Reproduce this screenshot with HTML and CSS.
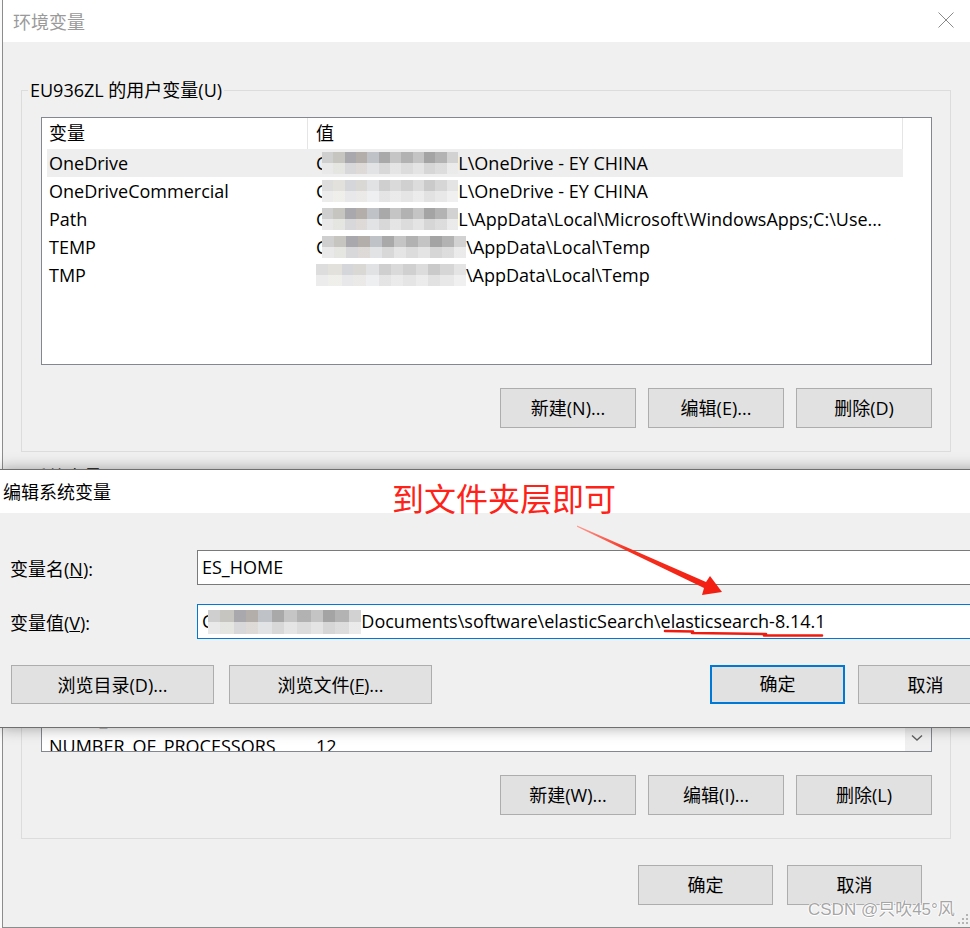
FILE: index.html
```html
<!DOCTYPE html>
<html lang="zh-CN">
<head>
<meta charset="utf-8">
<title>环境变量</title>
<link rel="stylesheet" href="styles.css">
</head>
<body>
<div class="env">
  <div class="env-title">
    <span class="env-title-text">环境变量</span>
    <svg class="close" width="16" height="16" viewBox="0 0 16 16"><path d="M0.5 0.5 L15.5 15.5 M15.5 0.5 L0.5 15.5" stroke="#8a8a8a" stroke-width="1" fill="none"/></svg>
  </div>
  <div class="env-body">
    <fieldset class="group">
      <legend>EU936ZL 的用户变量(U)</legend>
      <div class="list">
        <div class="list-main">
          <div class="list-head"><div class="hc hc1">变量</div><div class="hc hc2">值</div></div>
          <div class="row sel"><div class="c1">OneDrive</div><div class="c2"><span class="lead">C</span><span class="mz mz-136"></span>L\OneDrive - EY CHINA</div></div>
          <div class="row"><div class="c1">OneDriveCommercial</div><div class="c2"><span class="lead">C</span><span class="mz mz-136 light"></span>L\OneDrive - EY CHINA</div></div>
          <div class="row"><div class="c1">Path</div><div class="c2"><span class="lead">C</span><span class="mz mz-136"></span>L\AppData\Local\Microsoft\WindowsApps;C:\Use...</div></div>
          <div class="row"><div class="c1">TEMP</div><div class="c2"><span class="lead">C</span><span class="mz mz-144"></span>\AppData\Local\Temp</div></div>
          <div class="row"><div class="c1">TMP</div><div class="c2"><span class="mz mz-150 light"></span>\AppData\Local\Temp</div></div>
        </div>
        <div class="list-side"></div>
      </div>
      <div class="btns">
        <button class="btn">新建(N)...</button>
        <button class="btn">编辑(E)...</button>
        <button class="btn">删除(D)</button>
      </div>
    </fieldset>

    <fieldset class="group sys">
      <legend>系统变量(S)</legend>
      <div class="list">
        <div class="list-main">
          <div class="list-head"><div class="hc hc1">变量</div><div class="hc hc2">值</div></div>
          <div class="row"><div class="c1">ComSpec</div><div class="c2">C:\Windows\system32\cmd.exe</div></div>
          <div class="row"><div class="c1">DriverData</div><div class="c2">C:\Windows\System32\Drivers\DriverData</div></div>
          <div class="row"><div class="c1">ES_HOME</div><div class="c2">C:\Users\Documents\software\elasticSearch\elasticsearch-8.14.1</div></div>
          <div class="row"><div class="c1">JAVA_HOME</div><div class="c2">C:\Program Files\Java\jdk-17</div></div>
          <div class="row"><div class="c1">MAVEN_HOME</div><div class="c2">D:\apache-maven-3.9.6</div></div>
          <div class="row"><div class="c1">MYSQL_HOME</div><div class="c2">D:\mysql-8.0.36-winx64</div></div>
          <div class="row"><div class="c1">NODE_HOME</div><div class="c2">C:\Windows\NODE</div></div>
          <div class="row"><div class="c1">NUMBER_OF_PROCESSORS</div><div class="c2">12</div></div>
          <div class="row"><div class="c1">OS</div><div class="c2">Windows_NT</div></div>
        </div>
        <div class="list-side">
          <div class="scroll">
            <div class="scroll-down">
              <svg width="12" height="8" viewBox="0 0 12 8"><path d="M1 1.5 L6 6 L11 1.5" stroke="#606060" stroke-width="1.4" fill="none"/></svg>
            </div>
          </div>
        </div>
      </div>
      <div class="btns">
        <button class="btn">新建(W)...</button>
        <button class="btn">编辑(I)...</button>
        <button class="btn">删除(L)</button>
      </div>
    </fieldset>

    <div class="env-foot">
      <button class="btn foot-btn">确定</button>
      <button class="btn foot-btn">取消</button>
    </div>
  </div>
</div>

<div class="dlg">
  <div class="dlg-title">编辑系统变量</div>
  <div class="dlg-body">
    <div class="field">
      <label class="lbl">变量名(<u>N</u>):</label>
      <div class="input">ES_HOME</div>
    </div>
    <div class="field field-2">
      <label class="lbl">变量值(<u>V</u>):</label>
      <div class="input focus"><span class="lead">C</span><span class="mz mz-153 tall"></span>Documents\software\elasticSearch\elasticsearch-8.14.1</div>
    </div>
    <div class="dlg-btns">
      <div class="btn-group left">
        <button class="btn wide">浏览目录(D)...</button>
        <button class="btn wide">浏览文件(<u>F</u>)...</button>
      </div>
      <div class="btn-group right">
        <button class="btn mid default">确定</button>
        <button class="btn mid">取消</button>
      </div>
    </div>
  </div>
</div>

<div class="note">到文件夹层即可</div>

<svg class="annot" width="970" height="928" viewBox="0 0 970 928">
  <defs>
    <linearGradient id="ag" x1="578" y1="526" x2="722" y2="592" gradientUnits="userSpaceOnUse">
      <stop offset="0" stop-color="#ff9a90"/>
      <stop offset="0.35" stop-color="#f5301f"/>
      <stop offset="1" stop-color="#f21d10"/>
    </linearGradient>
  </defs>
  <polygon points="577,525.5 706,582 710,576 722,592 702,595 704,588 577,526.8" fill="url(#ag)"/>
  <path d="M665 631 L693 631.5 M692 633 L730 633.5 L766 634 M764 635.5 L822 635.5" stroke="#ee1c10" stroke-width="2.6" fill="none" stroke-linecap="round"/>
</svg>

<div class="wm">CSDN @只吹45°风</div>

<svg class="grip" width="14" height="14" viewBox="0 0 14 14">
  <rect x="11" y="1" width="2" height="2" fill="#b4b4b4"/>
  <rect x="7" y="5" width="2" height="2" fill="#b4b4b4"/>
  <rect x="11" y="5" width="2" height="2" fill="#b4b4b4"/>
  <rect x="3" y="9" width="2" height="2" fill="#b4b4b4"/>
  <rect x="7" y="9" width="2" height="2" fill="#b4b4b4"/>
  <rect x="11" y="9" width="2" height="2" fill="#b4b4b4"/>
</svg>
</body>
</html>
```

FILE: styles.css
```css
* { box-sizing: border-box; }

html, body {
  margin: 0;
  padding: 0;
}

body {
  width: 970px;
  height: 928px;
  overflow: hidden;
  position: relative;
  background: #fafafa;
  font-family: "Open Sans", "Noto Sans CJK SC", sans-serif;
  font-size: 18px;
  color: #000;
}

/* ---------- background window ---------- */
.env {
  margin-left: 2px;
  width: 968px;
  height: 928px;
  border-left: 1px solid #8c8c8c;
  border-bottom: 1px solid #8c8c8c;
  background: #f0f0f0;
  display: flex;
  flex-direction: column;
}

.env-title {
  height: 42px;
  flex: none;
  background: #fff;
  display: flex;
  align-items: center;
  justify-content: space-between;
  padding: 0 16px 0 10px;
}

.env-title-text {
  color: #9a9a9a;
  line-height: 40px;
  font-family: "Noto Sans CJK SC", sans-serif;
}

.close { display: block; margin-top: -2px; }

.env-body {
  padding: 36px 19px 0 18px;
}

fieldset.group {
  margin: 0;
  min-width: 0;
  padding: 15px 18px 23px 19px;
  border: 1px solid #dcdcdc;
}

fieldset.group legend {
  padding: 0 2px;
  margin-left: -13px;
  line-height: 24px;
}

fieldset.sys { margin-top: 13px; }

.list {
  height: 248px;
  border: 1px solid #828790;
  background: #fff;
  display: flex;
  overflow: hidden;
}

.list-main {
  flex: 1;
  min-width: 0;
  overflow: hidden;
}

.list-side {
  width: 28px;
  flex: none;
  display: flex;
  justify-content: flex-end;
}

.scroll {
  width: 26px;
  background: #f0f0f0;
  display: flex;
  flex-direction: column;
  justify-content: flex-end;
}

.scroll-down {
  height: 26px;
  display: flex;
  align-items: center;
  justify-content: center;
  padding-right: 2px;
}

.list-head {
  display: grid;
  grid-template-columns: 266px 1fr;
  height: 31px;
  border-right: 1px solid #e5e5e5;
}

.hc {
  line-height: 30px;
  white-space: nowrap;
}

.hc1 {
  padding-left: 7px;
  border-right: 1px solid #e5e5e5;
}

.hc2 { padding-left: 8px; }

.row {
  display: grid;
  grid-template-columns: 261px 1fr;
  height: 28px;
  margin-left: 5px;
  line-height: 28px;
  white-space: nowrap;
}

.row.sel { background: #eeeeee; }

.c1 {
  padding-left: 2px;
  overflow: hidden;
}

.c2 {
  padding-left: 8px;
  overflow: hidden;
  display: flex;
  align-items: center;
}

.lead { flex: none; }

/* pixelated privacy mosaic */
.mz {
  flex: none;
  display: inline-block;
  height: 22px;
  margin-left: -5px;
  background:
    linear-gradient(to bottom, rgba(255,255,255,0) 50%, rgba(255,255,255,.55) 50%),
    linear-gradient(90deg,
      #cfcfcf 0 8%, #c6c5bf 8% 17%, #a9a9ad 17% 25%, #b3aea9 25% 33%,
      #bfc2c6 33% 42%, #a9a9a9 42% 50%, #c5c5c5 50% 58%, #b2b2b2 58% 67%,
      #c4c4c4 67% 75%, #a4a4a4 75% 83%, #b3b3b3 83% 92%, #d2d2d2 92% 100%);
}

.mz.light {
  background:
    linear-gradient(to bottom, rgba(255,255,255,0) 50%, rgba(255,255,255,.45) 50%),
    linear-gradient(90deg,
      #dddddd 0 8%, #e2e1dc 8% 17%, #d5d6da 17% 25%, #dad8d5 25% 33%,
      #e0e2e4 33% 42%, #cfcfcf 42% 50%, #dadada 50% 58%, #d0d0d0 58% 67%,
      #dcdcdc 67% 75%, #cacaca 75% 83%, #d6d6d6 83% 92%, #e4e4e4 92% 100%);
}

.mz.tall { height: 24px; }

.mz-136 { width: 136px; }
.mz-144 { width: 144px; }
.mz-150 { width: 150px; margin-left: 0; }
.mz-153 { width: 153px; }

.btns {
  display: flex;
  justify-content: flex-end;
  gap: 12px;
  margin-top: 23px;
}

.btn {
  font-family: "Open Sans", "Noto Sans CJK SC", sans-serif;
  font-size: 18px;
  color: #000;
  background: #e1e1e1;
  border: 1px solid #adadad;
  border-radius: 0;
  padding: 0;
  margin: 0;
  height: 40px;
  width: 136px;
  line-height: 36px;
  text-align: center;
  white-space: nowrap;
}

.env-foot {
  display: flex;
  justify-content: flex-end;
  gap: 14px;
  margin-top: 26px;
  padding-right: 29px;
}

.foot-btn { width: 135px; }

/* ---------- front dialog ---------- */
.dlg {
  position: absolute;
  left: 0;
  top: 469px;
  width: 1004px;
  border-top: 1px solid #6f6f6f;
  border-bottom: 1px solid #6f6f6f;
  background: #f0f0f0;
  box-shadow: 0 0 14px rgba(0, 0, 0, 0.35);
}

.dlg-title {
  height: 43px;
  background: #fff;
  padding-left: 3px;
  line-height: 43px;
  font-family: "Noto Sans CJK SC", sans-serif;
}

.dlg-body {
  height: 214px;
  padding: 37px 11px 0 10px;
}

.field {
  display: grid;
  grid-template-columns: 187px 1fr;
  align-items: center;
}

.field-2 { margin-top: 19px; }

.lbl { white-space: nowrap; }

.input {
  height: 35px;
  border: 1px solid #7a7a7a;
  background: #fff;
  padding-left: 4px;
  line-height: 33px;
  white-space: nowrap;
  overflow: hidden;
  display: flex;
  align-items: center;
}

.input.focus { border-color: #0078d7; }

.dlg-btns {
  display: flex;
  justify-content: space-between;
  margin-top: 26px;
  padding-left: 1px;
}

.btn-group { display: flex; }
.btn-group.left { gap: 15px; }
.btn-group.right { gap: 13px; }

.btn.wide { width: 203px; height: 39px; }
.btn.mid { width: 135px; height: 39px; }
.btn.default { border: 2px solid #0078d7; line-height: 35px; }

/* ---------- annotations ---------- */
.note {
  position: absolute;
  left: 392px;
  top: 480px;
  font-family: "Noto Sans CJK SC", sans-serif;
  font-size: 32px;
  line-height: 35px;
  color: #ff2218;
  white-space: nowrap;
}

.annot {
  position: absolute;
  left: 0;
  top: 0;
  pointer-events: none;
}

.wm {
  position: absolute;
  left: 808px;
  top: 899px;
  font-family: "Liberation Sans", "Noto Sans CJK SC", sans-serif;
  font-size: 17px;
  line-height: 22px;
  color: #a6a6a6;
  text-shadow: 0 0 1px #fff, 1px 0 0 #fff, -1px 0 0 #fff, 0 1px 0 #fff;
  white-space: nowrap;
}

.grip {
  position: absolute;
  right: 1px;
  bottom: 1px;
}
```
